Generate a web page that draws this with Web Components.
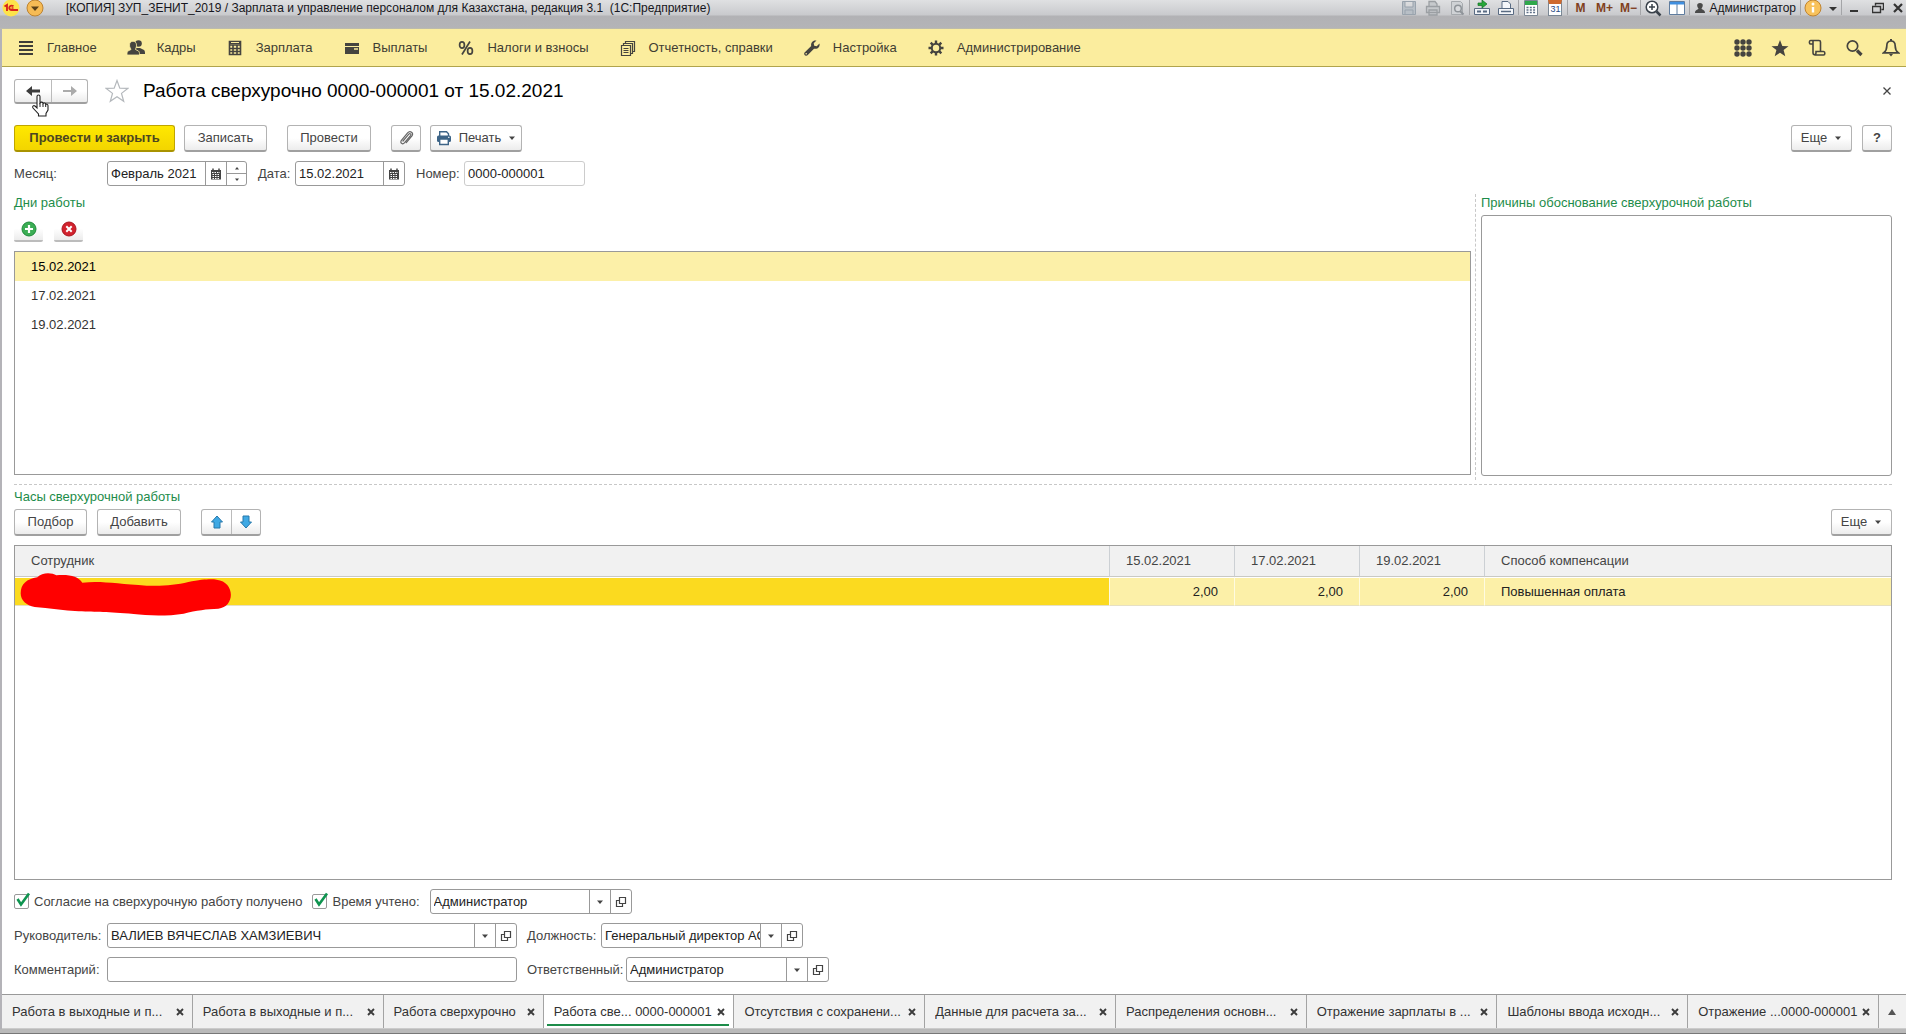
<!DOCTYPE html>
<html lang="ru">
<head>
<meta charset="utf-8">
<title>Работа сверхурочно 0000-000001 от 15.02.2021</title>
<style>
  html, body { margin: 0; height: 100%; }
  body { font: 13px/18px "Liberation Sans", Arial, sans-serif; color: #333; background: #fff; overflow: hidden; }
</style>
</head>
<body>
<app-window></app-window>
<script>
const BASE = `*{box-sizing:border-box}button,input,textarea{font:inherit;color:inherit;margin:0}button{padding:0;border:0;background:none}`;

const ICONS = {
  list: [18, 18, `<path d="M2 3h14M2 7h14M2 11h14M2 15h14" stroke="#3f3e38" stroke-width="2"/>`],
  people: [18, 18, `<g fill="#45443f"><circle cx="11.500" cy="4.500" r="3.300"/><path d="M9 9h4l4 2c1 1 1 2 1 4h-6c0-3-2-4-4-4z"/><path d="M2.500 6c0-5 7-5 7 0 0 3-1 3.500-1 4.500l3 1.500c1 1 1 2 1 4H0c0-2 0-3 1-4l3-1.500c0-1-1.500-1.500-1.500-4.500z" stroke="#fbed9e" stroke-width=".8"/></g>`],
  calc: [18, 18, `<path fill="none" stroke="#45443f" stroke-width="1.600" d="M3.500 2.500h11v13h-11zM3.500 6h11M3.500 9.500h11M3.500 12.500h11M7 6v9M11 6v9"/><path d="M3 2h12v3H3z" fill="#45443f"/><path d="M5 3.500h8" stroke="#fbed9e"/>`],
  wallet: [18, 18, `<path d="M2 4h14v3H2zM2 8h14v7H2z" fill="#45443f"/><path d="M11 10h4" stroke="#fbed9e" stroke-width="1.500"/>`],
  percent: [18, 18, `<g fill="none" stroke="#45443f" stroke-width="1.700"><ellipse cx="5" cy="6" rx="2.400" ry="3.200"/><ellipse cx="13" cy="12" rx="2.400" ry="3.200"/><path d="M13 2.500 5 15.500"/></g>`],
  docs: [18, 18, `<g fill="#fbed9e" stroke="#45443f" stroke-width="1.200"><path d="M6.500 2.500h9v10h-9z"/><path d="M4.500 4.500h9v10h-9z"/><path d="M2.500 6.500h9v10h-9z"/><path d="M4.500 9.500h5M4.500 11.500h5M4.500 13.500h5"/></g>`],
  wrench: [18, 18, `<path fill="#45443f" d="M16.500 4.500 13.700 7.200l-2.500-.5-.5-2.400L13.500 1.500C10 .8 7.500 3.500 8.200 7L1.600 13.400c-1.500 1.700 1.200 4.400 2.900 2.900l6.500-6.600c3.600.8 6.200-1.700 5.500-5.200zM3.200 15.500a.8.8 0 1 1 0-1.600.8.8 0 0 1 0 1.600z"/>`],
  gear: [18, 18, `<circle cx="9" cy="9" r="4.200" fill="none" stroke="#45443f" stroke-width="2"/><path d="M9 4.500V1.500M9 13.500v3M4.500 9h-3M13.500 9h3M5.800 5.800 3.700 3.700M12.200 12.200l2.100 2.100M5.800 12.200l-2.100 2.100M12.200 5.800l2.100-2.100" stroke="#45443f" stroke-width="2.400"/>`],
  grid9: [18, 18, `<g fill="#45443f"><circle cx="3" cy="3" r="2.700"/><circle cx="9" cy="3" r="2.700"/><circle cx="15" cy="3" r="2.700"/><circle cx="3" cy="9" r="2.700"/><circle cx="9" cy="9" r="2.700"/><circle cx="15" cy="9" r="2.700"/><circle cx="3" cy="15" r="2.700"/><circle cx="9" cy="15" r="2.700"/><circle cx="15" cy="15" r="2.700"/></g>`],
  star: [18, 18, `<path fill="#45443f" d="m9 1 2.300 5.900 6.200.3-4.900 3.900 1.700 6.100L9 13.700l-5.300 3.500 1.700-6.100L.5 7.200l6.200-.3z"/>`],
  scroll: [18, 18, `<path fill="none" stroke="#45443f" stroke-width="1.600" d="M5 5H2.500c-1.500 0-1.500-3.500 0-3.500H11c1 0 1.500.5 1.500 1.500v9.500M5 2v11.500c0 3 3 3 3 0v-1h7.500c1.800 0 1.800 3.500 0 3.500H6.500"/>`],
  search: [18, 18, `<circle cx="7.500" cy="7" r="5.200" fill="none" stroke="#45443f" stroke-width="1.700"/><path d="m12 11.500 4.500 4.500" stroke="#45443f" stroke-width="3.200"/>`],
  bell: [18, 18, `<path fill="none" stroke="#45443f" stroke-width="1.700" d="M9 2C5.500 2 4.800 4.500 4.800 7c0 3-.6 5-3 6.800h14.400c-2.400-1.800-3-3.800-3-6.800 0-2.500-.7-5-4.200-5z"/><path d="M7 15h4l-2 2.500zM8 0h2v2H8z" fill="#45443f"/>`],
  back: [16, 14, `<path d="M1 7l6-5v3.500h8v3H7V12z" fill="#3c3c3c"/>`],
  forward: [16, 14, `<path d="M15 7 9 2v4H1v2h8v4z" fill="#ababab"/>`],
  outline: [24, 24, `<path fill="#fff" stroke="#b4b8bc" stroke-width="1.200" d="m12 1.500 2.800 7.700 8 .2-6.300 5 2.200 7.900L12 17.700l-6.700 4.600 2.200-7.900-6.300-5 8-.2z"/>`],
  clip: [16, 18, `<path fill="none" stroke="#666" stroke-width="1.200" stroke-linecap="round" d="m5 12 5.800-6.800c1.200-1.400 2.800 0 1.700 1.400L6.600 13.700c-2 2.300-5 .2-3.200-2.300L9.600 3.900c2.600-3 6.500.2 4.200 3.200l-5.500 6.600"/>`],
  printer: [16, 16, `<path d="M3.700 6V1.700h6.800l2 2V6" fill="#fff" stroke="#3d6487" stroke-width="1.400"/><rect x="1" y="5.500" width="14" height="6.500" rx="1.500" fill="#3d6487"/><path d="M3.700 9h8.600v5.500H3.700z" fill="#fff" stroke="#3d6487" stroke-width="1.400"/><path d="M12 7.300h1.500" stroke="#fff"/>`],
  cal: [12, 12, `<path d="M1 2h10v9.500H1z" fill="#444"/><path d="M3 .5v2M9 .5v2" stroke="#444" stroke-width="1.500"/><path d="M2 4.500h8M2.500 6.500h7M2.500 8.500h7M2.500 10.500h7" stroke="#fff" stroke-dasharray="1.500 1"/>`],
  drop: [8, 6, `<path d="M1 1.500h6L4 5z" fill="#444"/>`],
  open: [12, 12, `<path d="M4.500 1.500h6v6h-6zM4 4.500H1.500v6h6V8" fill="none" stroke="#444" stroke-width="1.200"/>`],
  up: [8, 6, `<path d="M2 4.500h4L4 2z" fill="#444"/>`],
  down: [8, 6, `<path d="M2 1.500h4L4 4z" fill="#444"/>`],
  plus: [16, 16, `<circle cx="8" cy="8" r="7" fill="#3bad54" stroke="#1d8a39"/><path d="M8 4v8M4 8h8" stroke="#fff" stroke-width="2.200"/>`],
  remove: [16, 16, `<circle cx="8" cy="8" r="7" fill="#d2222d" stroke="#a91520"/><path d="m5.300 5.300 5.400 5.400M10.700 5.300l-5.400 5.400" stroke="#fff" stroke-width="2"/>`],
  arrowUp: [14, 14, `<path d="m7 1 5.500 6H10v6H4V7H1.500z" fill="#3fa9e4" stroke="#2778ab"/>`],
  arrowDown: [14, 14, `<path d="m7 13 5.500-6H10V1H4v6H1.500z" fill="#3fa9e4" stroke="#2778ab"/>`],
  close: [10, 10, `<path d="m1.500 1.500 7 7M8.500 1.500l-7 7" stroke="#444" stroke-width="1.300"/>`],
  tabClose: [8, 8, `<path d="m1 1 6 6M7 1 1 7" stroke="#3c3c3c" stroke-width="1.900"/>`],
  logo: [18, 18, `<circle cx="9" cy="9" r="8.500" fill="#fde34a"/><path d="M2.500 7.500 5 6v6M11.500 7.200c-4.500-2.400-6 4-1.500 3.800h6" fill="none" stroke="#d8231b" stroke-width="1.900"/><path d="M11.500 9H9.500" stroke="#d8231b" stroke-width="1.400"/>`],
  appMenu: [18, 18, `<circle cx="9" cy="9" r="8" fill="#f6bb55" stroke="#bd8331"/><path d="M5 7.500h8L9 12z" fill="#5b4118"/>`],
  save: [16, 16, `<path d="M1.500 1.500h13v13h-13zM4 2v5h8V2M4 14v-4h8v4" fill="#b8bfc6" stroke="#99a3ad"/>`],
  tbPrint: [16, 16, `<path d="M4 6V1.500h6L12 4v2M1.500 6.500h13v6h-13zM4 10h8v5H4z" fill="#c6c9cc" stroke="#9b9fa3" stroke-width="1.300"/>`],
  preview: [16, 16, `<path d="M2.500 1.500h9l2 2v11h-11z" fill="#cfd2d5" stroke="#a5a9ad"/><circle cx="9" cy="8.500" r="3.300" fill="#d8dadd" stroke="#8f9499" stroke-width="1.500"/><path d="m11 11 3.500 3.500" stroke="#8f9499" stroke-width="2"/>`],
  link: [18, 16, `<path d="M1.500 8.500h15v6h-15z" fill="#f3f5f8" stroke="#596b82"/><path d="M4 11.500h4M10 11.500h4" stroke="#596b82" stroke-width="2"/><path d="M5 5.500V3h4V0l5 4-5 4V5.500z" fill="#27a83a" stroke="#167026" stroke-width=".7"/>`],
  print2: [18, 16, `<path d="M5 8V1.500h6L13.500 4v4M1.500 8.500h15v6h-15z" fill="#f5f7fa" stroke="#596b82"/><path d="M4 11.500h10" stroke="#596b82" stroke-width="1.500"/>`],
  sheet: [14, 16, `<path d="M.5.500h13v15H.5z" fill="#fff" stroke="#7b8794"/><path d="M1 1h12v4H1z" fill="#2fa84c"/><path d="M2.500 7.500h9M2.500 10h9M2.500 12.500h9" stroke="#5d6f88" stroke-width="1.300" stroke-dasharray="2 1.300"/>`],
  zoom: [18, 18, `<circle cx="8" cy="8" r="5.800" fill="#fff" stroke="#39414a" stroke-width="1.500"/><path d="M8 5v6M5 8h6" stroke="#39414a" stroke-width="1.500"/><path d="m12.500 12.500 4 4" stroke="#39414a" stroke-width="2.500"/>`],
  panels: [16, 16, `<path d="M.5 1.500h15v13H.5zM8 2v12" fill="#fff" stroke="#5f7c9e"/><path d="M1 2h14v2.500H1z" fill="#3f8fe0"/>`],
  person: [10, 14, `<path fill="#4a4a4a" d="M5 2c4 0 3 4 1.500 5.500C7 9 10 8.500 10 12H0c0-3.500 3-3 3.500-4.500C2 6 1 2 5 2z"/>`],
  info: [18, 18, `<circle cx="9" cy="9" r="8" fill="#f8c25c" stroke="#c08430"/><path d="M9 8v5.500" stroke="#fff" stroke-width="2.400"/><circle cx="9" cy="5" r="1.500" fill="#fff"/>`],
  tbDrop: [10, 10, `<path d="M1 4h8L5 8z" fill="#333"/>`],
  min: [10, 10, `<path d="M1 8h8" stroke="#333" stroke-width="2"/>`],
  restore: [12, 12, `<path d="M3.500 3.500v-2h8v6h-2M.5 4.500h8v6h-8z" fill="none" stroke="#333" stroke-width="1.400"/>`],
  winClose: [10, 10, `<path d="m1 1 8 8M9 1 1 9" stroke="#333" stroke-width="2.200"/>`],
  scrollUp: [10, 8, `<path d="M1 7h8L5 1z" fill="#555"/>`]
};
const icon = (n, extra = "") => { const [w, h, b] = ICONS[n]; return `<svg ${extra} width="${w}" height="${h}" viewBox="0 0 ${w} ${h}" aria-hidden="true" style="display:block;flex:none">${b}</svg>`; };

function define(name, render) {
  customElements.define(name, class extends HTMLElement {
    connectedCallback() {
      if (this.shadowRoot) return;
      this.attachShadow({ mode: "open" }).innerHTML = render(n => this.getAttribute(n), this);
    }
  });
}

define("title-bar", () => `<style>${BASE}
  :host{display:block;height:29px;flex:none;color:#161620;background:linear-gradient(#dfe0e2,#c9cacd 15px,#b2b2b5 16px,#b4b4b7 28px,#c5c2a0 29px)}
  .bar{display:flex;height:15px;align-items:center}
  .left{display:flex;align-items:center;gap:6px;padding-left:2px;flex:1;font-size:12px}
  .title{padding-left:16px;white-space:nowrap}
  .group{display:flex;align-items:center;height:15px;border-left:1px solid #a4a5a8}
  .group:first-of-type{border:0}
  button{width:24px;height:18px;display:flex;align-items:center;justify-content:center;flex:none}
  .m{font-weight:bold;font-size:12px;color:#80401c}
  .user{width:auto;gap:4px;padding:0 4px 0 5px;font-size:12px}
  .info{width:20px}.last{width:16px}.day{border:1px solid #7b8794;border-top:4px solid #cf6a2e;background:#fff;width:14px;height:16px;font-size:9px;line-height:10px;color:#294a86}
  </style><div class="bar">
  <div class="left">${icon("logo")}${icon("appMenu")}<span class="title">[КОПИЯ] ЗУП_ЗЕНИТ_2019 / Зарплата и управление персоналом для Казахстана, редакция 3.1&nbsp; (1С:Предприятие)</span></div>
  <div class="group" style="border:0">${["save","tbPrint","preview"].map(i=>`<button>${icon(i)}</button>`).join("")}</div>
  <div class="group"><button>${icon("link")}</button><button>${icon("print2")}</button></div>
  <div class="group"><button>${icon("sheet")}</button><button><span class="day">31</span></button></div>
  <div class="group"><button class="m">M</button><button class="m">M+</button><button class="m">M−</button></div>
  <div class="group"><button>${icon("zoom")}</button><button>${icon("panels")}</button></div>
  <div class="group"><button class="user">${icon("person")}<span>Администратор</span></button></div>
  <div class="group"><button>${icon("info")}</button><button class="last">${icon("tbDrop")}</button></div>
  <div class="group"><button>${icon("min")}</button><button>${icon("restore")}</button><button class="last">${icon("winClose")}</button></div>
  </div>`);

define("menu-item", a => `<style>${BASE}:host{display:block}
  button{display:flex;align-items:center;gap:12px;height:36px;color:#3f3d33;white-space:nowrap}</style>
  <button>${icon(a("icon"))}<span><slot></slot></span></button>`);

define("main-menu", () => `<style>${BASE}
  :host{display:flex;flex:none;align-items:center;height:37px;padding:0 6px 0 15px;background:#fbed9e;border-bottom:1px solid #b0a44c}
  nav{display:flex;gap:30px;flex:1}.tools{display:flex;gap:19px}</style>
  <nav>
  <menu-item icon="list">Главное</menu-item><menu-item icon="people">Кадры</menu-item><menu-item icon="calc">Зарплата</menu-item>
  <menu-item icon="wallet">Выплаты</menu-item><menu-item icon="percent">Налоги и взносы</menu-item><menu-item icon="docs">Отчетность, справки</menu-item>
  <menu-item icon="wrench">Настройка</menu-item><menu-item icon="gear">Администрирование</menu-item></nav>
  <div class="tools">${["grid9","star","scroll","search","bell"].map(i=>`<button aria-label="${i}">${icon(i)}</button>`).join("")}</div>`);

define("cmd-button", a => `<style>${BASE}
  :host{display:block}
  button{display:flex;align-items:center;justify-content:center;gap:7px;width:100%;height:27px;padding:0 ${a("pad") || 13}px;color:#444;white-space:nowrap;
    border:1px solid #b3b3b3;border-bottom:2px solid #a0a0a0;border-radius:3px;background:linear-gradient(#fff 50%,#ececec)}
  :host([primary]) button{font-weight:bold;color:#4c4620;border-color:#bfa500;border-bottom-color:#a99300;background:linear-gradient(#ffe800,#f3d500)}
  </style><button ${a("label") ? `aria-label="${a("label")}"` : ""}>${a("icon") ? icon(a("icon")) : ""}<slot></slot>${a("menu") !== null ? icon("drop") : ""}</button>`);

define("button-pair", a => `<style>${BASE}
  :host{display:flex;height:${a("height")}px;border:1px solid #b3b3b3;border-bottom:2px solid #a0a0a0;border-radius:3px;background:linear-gradient(#fff 50%,#ececec)}
  button{width:${a("cell")}px;display:flex;align-items:center;justify-content:center}button+button{border-left:1px solid #bbb}</style>
  <button aria-label="${a("first")}">${icon(a("first"))}</button><button aria-label="${a("second")}">${icon(a("second"))}</button>`);

define("form-field", a => {
  const parts = (a("parts") || "").split(" ").filter(Boolean);
  return `<style>${BASE}
  :host{display:flex;align-items:center;height:25px}
  label{width:${a("label-width")}px;flex:none;color:#444;white-space:nowrap}
  .box{display:flex;width:${a("width")}px;height:25px;border:1px solid #999;border-radius:3px;overflow:hidden;background:#fff}
  :host([readonly]) .box{border-color:#ccc}
  input{flex:1;min-width:0;border:0;outline:0;padding:0 0 0 3px;background:none;color:#222}
  button{width:21px;flex:none;display:flex;align-items:center;justify-content:center;border-left:1px solid #999}
  .spin{display:flex;flex-direction:column;width:20px;border-left:1px solid #999}
  .spin button{width:auto;flex:1;border:0}.spin button+button{border-top:1px solid #999}</style>
  <label for="f">${a("label")}</label><span class="box"><input id="f" value="${a("value")}" ${a("readonly") !== null ? "readonly" : ""}>${parts.map(p => p === "spin" ? `<span class="spin"><button aria-label="Больше">${icon("up")}</button><button aria-label="Меньше">${icon("down")}</button></span>` : `<button aria-label="${p}">${icon(p)}</button>`).join("")}</span>`;
});

define("check-field", a => `<style>${BASE}
  :host{display:block}label{display:flex;align-items:center;gap:5px;color:#444;white-space:nowrap;height:25px}
  input{appearance:none;width:15px;height:15px;border:1px solid #999;border-radius:2px;background:#fff}
  .tick{position:relative;display:flex}.tick svg{position:absolute;left:2px;top:-2px;pointer-events:none}</style>
  <label><span class="tick"><input type="checkbox" checked><svg width="16" height="16" viewBox="0 0 16 16"><path d="M1.500 7 5 12.500 13 1.500" fill="none" stroke="#0f9450" stroke-width="2.600"/></svg></span><slot></slot></label>`);

define("group-title", () => `<style>:host{display:block;height:18px;color:#1d8c4a;white-space:nowrap}</style><slot></slot>`);

define("form-header", () => `<style>${BASE}
  :host{display:flex;align-items:center;height:24px;flex:none}
  .nav{position:relative;margin-right:17px}
  .cursor{position:absolute;left:18px;top:15px}
  h1{flex:1;margin:0 0 0 14px;font-weight:normal;font-size:19px;line-height:24px;color:#000}
  .x{width:10px;height:10px}</style>
  <div class="nav"><button-pair first="back" second="forward" height="25" cell="36"></button-pair>
  <svg class="cursor" width="17" height="23" viewBox="0 0 17 23"><path d="M5 14V2.500c0-2 3-2 3 0V9c1-1.500 2.800-1 3 .5 1-1 2.600-.5 2.700 1 1.200-.8 2.300 0 2.300 1.300V16l-2 3.500V22H6.500v-2L1 14c-1-2 .8-3 2-2z" fill="#fff" stroke="#222" stroke-width="1.100"/><path d="M8 9v4M11 10v3M13.700 11v2" stroke="#222"/></svg></div>
  ${icon("outline")}<h1>Работа сверхурочно 0000-000001 от 15.02.2021</h1><button class="x" aria-label="Закрыть">${icon("close")}</button>`);

define("days-panel", () => `<style>${BASE}
  :host{display:flex;flex-direction:column;min-width:0;height:281px}
  .tools{display:flex;gap:11px;padding:5px 0 9px}
  .tools button{width:29px;height:25px;display:flex;align-items:center;justify-content:center;border-bottom:2px solid #bcbcbc;border-radius:2px;background:linear-gradient(#fff 50%,#ececec)}
  ul{flex:1;margin:0;padding:0;list-style:none;border:1px solid #999}
  li{height:29px;line-height:29px;padding-left:16px;color:#333}
  li[aria-selected=true]{background:#fcf0a8;color:#000}</style>
  <group-title>Дни работы</group-title>
  <div class="tools"><button aria-label="Добавить день">${icon("plus")}</button><button aria-label="Удалить день">${icon("remove")}</button></div>
  <ul role="listbox"><li role="option" aria-selected="true">15.02.2021</li><li role="option">17.02.2021</li><li role="option">19.02.2021</li></ul>`);

define("reason-panel", () => `<style>${BASE}
  :host{display:flex;flex-direction:column;gap:3px;min-width:0;height:282px}
  label{color:#1d8c4a;height:18px;white-space:nowrap}
  textarea{flex:1;width:100%;border:1px solid #999;border-radius:3px;resize:none;outline:0}</style>
  <label for="r">Причины обоснование сверхурочной работы</label><textarea id="r"></textarea>`);

define("hours-table", () => `<style>${BASE}
  :host{display:block;border:1px solid #999;min-height:90px}
  table{width:100%;border-collapse:separate;border-spacing:0;table-layout:fixed}
  th{height:31px;padding:0 16px;text-align:left;font-weight:normal;color:#444;background:#f1f1f1;border-bottom:1px solid #c9c9c4}
  th+th{border-left:1px solid #ccd0d4}
  td{height:29px;padding:0 16px;background:#fcf0a8;border-top:1px solid #fff;border-bottom:1px solid #e6e0c4;color:#222}
  td+td{border-left:1px solid #fffbe0}
  td.now{background:#fbda1f;position:relative}.num{text-align:right}
  .mark{position:absolute;left:5px;top:-7px}
  .c{width:125px}.w{width:407px}</style>
  <table><colgroup><col><col class="c"><col class="c"><col class="c"><col class="w"></colgroup>
  <thead><tr><th>Сотрудник</th><th>15.02.2021</th><th>17.02.2021</th><th>19.02.2021</th><th>Способ компенсации</th></tr></thead>
  <tbody><tr><td class="now"><svg class="mark" width="212" height="47" viewBox="60 318 636 141"><path fill="#f00" d="M62 385c0-28 18-43 50-48 14-16 44-15 57-6 40-3 65 3 78 22 60-6 105 4 193 9 50 2 86-2 125-11 45-9 70-9 85-7 56 6 56 82 5 87-35 1-65 5-104 15-50 8-110 6-150 1-80-7-110-5-165-8-45-3-90-9-132-13-25-4-42-20-42-41z"/></svg></td>
  <td class="num">2,00</td><td class="num">2,00</td><td class="num">2,00</td><td>Повышенная оплата</td></tr></tbody></table>`);

define("window-tab", a => `<style>${BASE}
  :host{display:flex;flex:${a("grow")} 1 0;min-width:0;position:relative;align-items:center;padding:0 8px 0 10px;border-right:1px solid #a3a3a3;background:#f1f1f1}
  :host([active]){background:#fff}
  :host([active])::after{content:"";position:absolute;left:3px;right:4px;bottom:2px;height:2px;background:#1d8c4a}
  .name{flex:1;min-width:0;text-align:left;white-space:nowrap;overflow:hidden;color:#333}
  .x{width:8px;height:8px}</style><button class="name"><slot></slot></button><button class="x" aria-label="Закрыть вкладку">${icon("tabClose")}</button>`);

define("tab-strip", () => `<style>${BASE}
  :host{display:flex;flex:none;height:33px;border-top:1px solid #999;border-bottom:1px solid #ccc}
  .more{width:27px;display:flex;align-items:center;justify-content:center;background:#f1f1f1}</style>
  <window-tab grow="191">Работа в выходные и п...</window-tab><window-tab grow="191">Работа в выходные и п...</window-tab>
  <window-tab grow="157">Работа сверхурочно</window-tab><window-tab grow="191" active>Работа све... 0000-000001</window-tab>
  <window-tab grow="191">Отсутствия с сохранени...</window-tab><window-tab grow="191">Данные для расчета за...</window-tab>
  <window-tab grow="191">Распределения основн...</window-tab><window-tab grow="191">Отражение зарплаты в ...</window-tab>
  <window-tab grow="191">Шаблоны ввода исходн...</window-tab><window-tab grow="191">Отражение ...0000-000001</window-tab>
  <button class="more" aria-label="Ещё вкладки">${icon("scrollUp")}</button>`);

define("overtime-form", () => `<style>${BASE}
  :host{display:flex;flex-direction:column;flex:1;min-height:0;padding:12px 14px 12px 12px}
  .row{display:flex;flex:none}.fill{flex:1}
  .cmds{margin-top:22px}.fields{margin-top:9px;gap:11px}
  .split{display:grid;flex:none;grid-template-columns:minmax(0,1457fr) 10px minmax(0,411fr);margin-top:8px;padding-bottom:4px;border-bottom:1px dashed #c8c8c8}
  .line{width:5px;border-right:1px dashed #c8c8c8;height:286px}
  .hours{margin-top:3px}.htools{margin:3px 0 9px}
  hours-table{flex:1}.b{margin-top:9px;gap:10px}
  .g1{margin-left:9px}.g2{margin-left:20px}.g3{margin-left:10px}</style>
  <form-header></form-header>
  <div class="row cmds">
    <cmd-button primary style="width:161px">Провести и закрыть</cmd-button><cmd-button class="g1" style="width:83px">Записать</cmd-button>
    <cmd-button class="g2" style="width:84px">Провести</cmd-button><cmd-button class="g2" pad="0" icon="clip" label="Файлы" style="width:30px"></cmd-button>
    <cmd-button class="g1" pad="5" icon="printer" menu style="width:92px">Печать</cmd-button><span class="fill"></span>
    <cmd-button menu pad="5" style="width:61px">Еще</cmd-button><cmd-button class="g3" pad="0" style="width:30px"><b>?</b></cmd-button>
  </div>
  <div class="row fields">
    <form-field label="Месяц:" label-width="93" width="140" value="Февраль 2021" parts="cal spin"></form-field>
    <form-field label="Дата:" label-width="37" width="110" value="15.02.2021" parts="cal"></form-field>
    <form-field label="Номер:" label-width="48" width="121" value="0000-000001" readonly></form-field>
  </div>
  <div class="split"><days-panel></days-panel><div class="line"></div><reason-panel></reason-panel></div>
  <group-title class="hours">Часы сверхурочной работы</group-title>
  <div class="row htools">
    <cmd-button style="width:73px">Подбор</cmd-button><cmd-button class="g3" style="width:84px">Добавить</cmd-button>
    <button-pair class="g2" first="arrowUp" second="arrowDown" height="27" cell="29"></button-pair><span class="fill"></span>
    <cmd-button menu pad="5" style="width:61px">Еще</cmd-button>
  </div>
  <hours-table></hours-table>
  <div class="row b"><check-field>Согласие на сверхурочную работу получено</check-field>
    <check-field>Время учтено:</check-field><form-field label="" label-width="0" width="202" value="Администратор" parts="drop open"></form-field></div>
  <div class="row b"><form-field label="Руководитель:" label-width="93" width="410" value="ВАЛИЕВ ВЯЧЕСЛАВ ХАМЗИЕВИЧ" parts="drop open"></form-field>
    <form-field label="Должность:" label-width="74" width="202" value="Генеральный директор АО" parts="drop open"></form-field></div>
  <div class="row b"><form-field label="Комментарий:" label-width="93" width="410" value=""></form-field>
    <form-field label="Ответственный:" label-width="99" width="203" value="Администратор" parts="drop open"></form-field></div>`);

define("app-window", () => `<style>
  :host{display:flex;flex-direction:column;height:100vh;min-height:760px}
  .body{display:flex;flex-direction:column;flex:1;min-height:0;border-left:2px solid #b4b3b8}
  .edge{height:4px;flex:none;background:#b9b9b9;border-bottom:1px solid #777}</style>
  <title-bar></title-bar><div class="body"><main-menu></main-menu><overtime-form></overtime-form><tab-strip></tab-strip></div><div class="edge"></div>`);
</script>
</body>
</html>
